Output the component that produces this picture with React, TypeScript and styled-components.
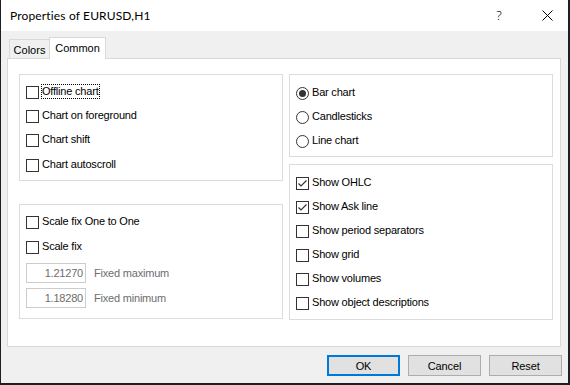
import React from "react";
import styled, { createGlobalStyle } from "styled-components";

const GlobalStyle = createGlobalStyle`
  html, body {
    margin: 0;
    padding: 0;
    background: #1e1f1e;
  }
  body {
    font-family: "Liberation Sans", Arial, sans-serif;
    font-size: 11px;
    color: #000;
  }
`;

const leftTop = ["Offline chart", "Chart on foreground", "Chart shift", "Chart autoscroll"];
const chartTypes = ["Bar chart", "Candlesticks", "Line chart"];
const showItems = [
  { label: "Show OHLC", checked: true },
  { label: "Show Ask line", checked: true },
  { label: "Show period separators", checked: false },
  { label: "Show grid", checked: false },
  { label: "Show volumes", checked: false },
  { label: "Show object descriptions", checked: false },
];

function CheckBox({ checked }: { checked?: boolean }) {
  return (
    <Box>
      {checked && (
        <svg width="11" height="11" viewBox="0 0 11 11">
          <polyline points="1.5,5.5 4,8 9.5,2.5" fill="none" stroke="#333" strokeWidth="1.2" />
        </svg>
      )}
    </Box>
  );
}

function App() {
  return (
    <>
      <GlobalStyle />
      <Window>
        <TitleBar>
          <Title>Properties of EURUSD,H1</Title>
          <CaptionButton>?</CaptionButton>
          <CaptionButton $close>
            <svg width="11" height="11" viewBox="0 0 11 11">
              <path d="M0.5 0.5 L10.5 10.5 M10.5 0.5 L0.5 10.5" stroke="#000" strokeWidth="1" />
            </svg>
          </CaptionButton>
        </TitleBar>

        <Body>
          <TabStrip>
            <Tab>Colors</Tab>
            <Tab $active>Common</Tab>
          </TabStrip>

          <Panel>
            <Column>
              <Group $height={107} $pt={11}>
                {leftTop.map((t, i) => (
                  <Row key={t} $mt={i === 3 ? 1 : 0}>
                    <CheckBox />
                    <Label $focus={i === 0}>{t}</Label>
                  </Row>
                ))}
              </Group>

              <Group $height={115} $pt={11} $mt={23} $gap={0}>
                <Row>
                  <CheckBox />
                  <Label>Scale fix One to One</Label>
                </Row>
                <Row $mt={12}>
                  <CheckBox />
                  <Label>Scale fix</Label>
                </Row>
                <EditRow $mt={9}>
                  <Edit>1.21270</Edit>
                  <DimLabel>Fixed maximum</DimLabel>
                </EditRow>
                <EditRow $mt={5}>
                  <Edit>1.18280</Edit>
                  <DimLabel>Fixed minimum</DimLabel>
                </EditRow>
              </Group>
            </Column>

            <Column>
              <Group $height={83} $pt={12}>
                {chartTypes.map((t, i) => (
                  <Row key={t}>
                    <Radio>{i === 0 && <Dot />}</Radio>
                    <Label>{t}</Label>
                  </Row>
                ))}
              </Group>

              <Group $height={156} $pt={12} $mt={7}>
                {showItems.map((s) => (
                  <Row key={s.label}>
                    <CheckBox checked={s.checked} />
                    <Label>{s.label}</Label>
                  </Row>
                ))}
              </Group>
            </Column>
          </Panel>

          <Buttons>
            <Button $default>OK</Button>
            <Button>Cancel</Button>
            <Button>Reset</Button>
          </Buttons>
        </Body>
      </Window>
    </>
  );
}

const Window = styled.div`
  width: 567px;
  height: 383px;
  margin-left: 1px;
  background: #f0f0f0;
  display: flex;
  flex-direction: column;
`;

const TitleBar = styled.div`
  height: 31px;
  background: #fff;
  display: flex;
  align-items: center;
`;

const Title = styled.div`
  flex: 1;
  padding-left: 9px;
  padding-bottom: 1px;
  font-family: Lato, "Noto Sans", sans-serif;
  font-size: 12px;
  letter-spacing: 0.15px;
`;

const CaptionButton = styled.div<{ $close?: boolean }>`
  width: 46px;
  height: 31px;
  display: flex;
  align-items: center;
  justify-content: center;
  padding-left: ${(p) => (p.$close ? "4px" : "0")};
  padding-bottom: 1px;
  box-sizing: border-box;
  font-family: "Noto Sans", sans-serif;
  font-size: 13px;
  font-weight: 300;
`;

const Body = styled.div`
  padding: 6px 7px 0 6px;
  display: flex;
  flex-direction: column;
`;

const TabStrip = styled.div`
  display: flex;
  align-items: flex-start;
  height: 22px;
  padding-left: 2px;
  margin-bottom: -1px;
`;

const Tab = styled.div<{ $active?: boolean }>`
  position: relative;
  z-index: ${(p) => (p.$active ? 2 : 1)};
  box-sizing: border-box;
  width: ${(p) => (p.$active ? "57px" : "41px")};
  height: ${(p) => (p.$active ? "22px" : "19px")};
  margin-top: ${(p) => (p.$active ? "0" : "2px")};
  margin-right: ${(p) => (p.$active ? "0" : "-1px")};
  padding-top: 4px;
  border: 1px solid #d9d9d9;
  border-bottom: none;
  background: ${(p) => (p.$active ? "#fff" : "#f0f0f0")};
  text-align: center;
  line-height: 13px;
`;

const Panel = styled.div`
  box-sizing: border-box;
  width: 554px;
  height: 289px;
  border: 1px solid #d9d9d9;
  background: #fff;
  display: flex;
  gap: 6px;
  padding: 15px 7px 0 11px;
`;

const Column = styled.div`
  width: 264px;
  display: flex;
  flex-direction: column;
`;

const Group = styled.div<{ $height: number; $pt: number; $mt?: number; $gap?: number }>`
  box-sizing: border-box;
  height: ${(p) => p.$height}px;
  margin-top: ${(p) => p.$mt ?? 0}px;
  padding: ${(p) => p.$pt}px 6px 0 6px;
  border: 1px solid #dcdcdc;
  display: flex;
  flex-direction: column;
  gap: ${(p) => p.$gap ?? 11}px;
`;

const Row = styled.div<{ $mt?: number }>`
  height: 13px;
  margin-top: ${(p) => p.$mt ?? 0}px;
  display: flex;
  align-items: center;
`;

const Box = styled.div`
  box-sizing: border-box;
  width: 13px;
  height: 13px;
  border: 1px solid #333;
  background: #fff;
  flex-shrink: 0;
  display: flex;
  align-items: center;
  justify-content: center;
`;

const Radio = styled(Box)`
  border-radius: 50%;
`;

const Dot = styled.div`
  width: 7px;
  height: 7px;
  border-radius: 50%;
  background: #333;
`;

const Label = styled.span<{ $focus?: boolean }>`
  align-self: flex-end;
  margin-left: 2px;
  border: 1px ${(p) => (p.$focus ? "dotted #000" : "solid transparent")};
  line-height: 13px;
  white-space: nowrap;
  letter-spacing: -0.2px;
`;

const EditRow = styled.div<{ $mt?: number }>`
  height: 20px;
  margin-top: ${(p) => p.$mt ?? 0}px;
  display: flex;
  align-items: center;
`;

const Edit = styled.div`
  box-sizing: border-box;
  width: 60px;
  height: 20px;
  border: 1px solid #ccc;
  background: #fff;
  color: #6d6d6d;
  text-align: right;
  padding-right: 2px;
  line-height: 18px;
  letter-spacing: -0.2px;
`;

const DimLabel = styled.span`
  margin-left: 8px;
  color: #6d6d6d;
  letter-spacing: -0.2px;
`;

const Buttons = styled.div`
  display: flex;
  justify-content: flex-end;
  gap: 8px;
  margin-top: 8px;
  margin-right: -1px;
`;

const Button = styled.div<{ $default?: boolean }>`
  box-sizing: border-box;
  width: 73px;
  height: 21px;
  border: ${(p) => (p.$default ? "2px solid #0078d7" : "1px solid #adadad")};
  background: #e1e1e1;
  display: flex;
  align-items: center;
  justify-content: center;
  letter-spacing: -0.1px;
`;

export default App;
